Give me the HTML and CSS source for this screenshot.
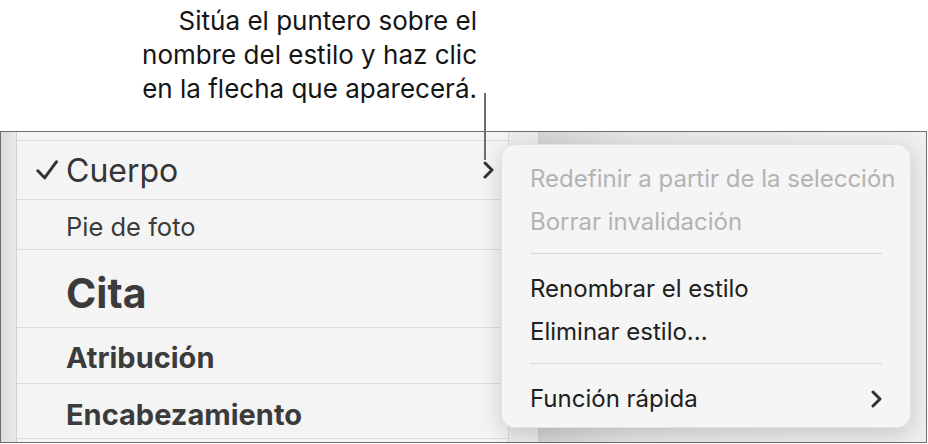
FILE: index.html
```html
<html>
<head>
    <meta charset="UTF-8">
    <link rel="stylesheet" href="styles.css">
</head>

<body>

<div class="callout">
    <p class="callout_text">Sitúa el puntero sobre el<br>nombre del estilo y haz clic<br>en la flecha que aparecerá.</p>
</div>

<div class="frame">
    <div class="gutter"></div>
    <ul class="styles">
        <li class="row row_tail"></li>
        <li class="row row_body">
            <svg class="check" width="22" height="20" viewBox="0 0 22 20">
                <polyline points="1.8,10.8 8.6,17.8 20.4,1.8"/>
            </svg>
            <span>Cuerpo</span>
            <svg class="chevron" width="11" height="18" viewBox="0 0 11 18">
                <polyline points="2,2 9,9 2,16"/>
            </svg>
        </li>
        <li class="row row_caption"><span>Pie de foto</span></li>
        <li class="row row_quote"><span>Cita</span></li>
        <li class="row row_attrib"><span>Atribución</span></li>
        <li class="row row_heading"><span>Encabezamiento</span></li>
    </ul>
    <div class="strip"></div>
    <div class="canvas"></div>
</div>

<span class="leader"></span>

<div class="menu">
    <div class="menu_item disabled">Redefinir a partir de la selección</div>
    <div class="menu_item disabled">Borrar invalidación</div>
    <div class="menu_sep"></div>
    <div class="menu_item">Renombrar el estilo</div>
    <div class="menu_item">Eliminar estilo...</div>
    <div class="menu_sep"></div>
    <div class="menu_item">
        <span>Función rápida</span>
        <svg class="chevron" width="11" height="18" viewBox="0 0 11 18">
            <polyline points="2,2 9,9 2,16"/>
        </svg>
    </div>
</div>

</body>

</html>
```

FILE: styles.css
```css
body {
    position: relative;
    margin: 0;
    width: 928px;
    height: 444px;
    overflow: hidden;
    background: white;
    font-family: Inter, "Noto Sans", sans-serif;
}

/* callout text above the screenshot */
.callout {
    height: 131px;
    width: 477px;
    padding-top: 4px;
    box-sizing: border-box;
}

.callout_text {
    margin: 0;
    text-align: right;
    font-size: 26px;
    line-height: 34px;
    color: #151515;
}

.leader {
    position: absolute;
    left: 484px;
    top: 93px;
    width: 2px;
    height: 67px;
    background: #6e6e6e;
}

/* framed screenshot */
.frame {
    display: flex;
    width: 927px;
    height: 312px;
    box-sizing: border-box;
    border: 1px solid #707070;
}

.gutter {
    width: 16px;
    border-right: 1px solid #d2d2d2;
    box-sizing: border-box;
    background: linear-gradient(to right, #dcdcdc, #e9e9e9);
}

.styles {
    width: 492px;
    margin: 0;
    padding: 0;
    list-style: none;
    box-sizing: border-box;
    border-right: 1px solid #d8d8d8;
    background: #f4f4f4;
    color: #3b3b3b;
}

.row {
    display: flex;
    align-items: center;
    box-sizing: border-box;
    padding-left: 49px;
    padding-right: 14px;
    border-bottom: 1px solid #dcdcdc;
}

.row_tail {
    height: 9px;
}

.row_body {
    height: 59px;
    padding-left: 19px;
    font-size: 32px;
    color: #353535;
}

.row_body .check {
    margin-right: 8px;
}

.row_body .chevron {
    margin-left: auto;
}

.row_caption {
    height: 50px;
    padding-top: 3px;
    font-size: 25.5px;
}

.row_quote {
    height: 78px;
    padding-top: 9px;
    font-size: 41px;
    font-weight: 700;
}

.row_attrib {
    height: 56px;
    padding-top: 4px;
    font-size: 29px;
    font-weight: 700;
}

.row_heading {
    height: 55px;
    padding-top: 6px;
    font-size: 29px;
    font-weight: 700;
}

.check polyline,
.chevron polyline {
    fill: none;
    stroke: #333;
    stroke-width: 3;
    stroke-linecap: round;
    stroke-linejoin: round;
}

.strip {
    width: 30px;
    box-sizing: border-box;
    border-right: 1px solid #cfcfcf;
    background: #ececec;
}

.canvas {
    flex: 1;
    background: linear-gradient(to right, #d4d4d4, #e6e6e6 25%, #ececec 60%, #efefef);
}

/* popover menu */
.menu {
    position: absolute;
    left: 501px;
    top: 144px;
    width: 410px;
    height: 284px;
    box-sizing: border-box;
    padding: 12px 28px 0;
    border: 1px solid rgba(0, 0, 0, 0.07);
    border-radius: 14px;
    background: #f5f5f5;
    box-shadow: 0 6px 22px rgba(0, 0, 0, 0.17);
    font-size: 24px;
    color: #202020;
}

.menu_item {
    display: flex;
    align-items: center;
    height: 43px;
    white-space: nowrap;
}

.menu_item .chevron {
    margin-left: auto;
}

.menu_item.disabled {
    color: #b3b3b3;
}

.menu_sep {
    height: 1px;
    margin: 10px 0 13px;
    background: #d8d8d8;
}
```
